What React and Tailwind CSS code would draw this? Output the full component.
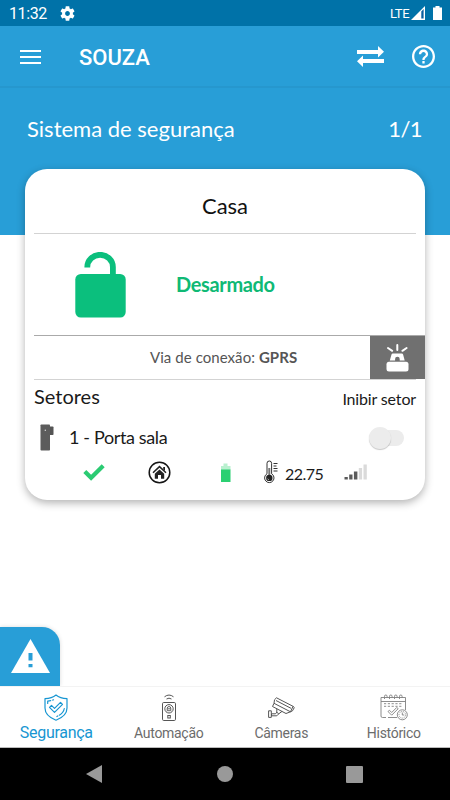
const LATO = "font-['Lato',sans-serif]"
const ROBOTO = "font-['Roboto',sans-serif]"

function StatusBar() {
  return (
    <div className="h-[26px] bg-[#0072a8] text-white flex items-center pl-[9px] pr-[8px]">
      <span className="text-[16px] leading-none w-[51px] pt-[2px] tracking-[-0.4px]">11:32</span>
      <svg width="15" height="15" viewBox="2 2 20 20" fill="currentColor">
        <path d="M19.14 12.94c.04-.3.06-.61.06-.94 0-.32-.02-.64-.07-.94l2.03-1.58c.18-.14.23-.41.12-.61l-1.92-3.32c-.12-.22-.37-.29-.59-.22l-2.39.96c-.5-.38-1.03-.7-1.62-.94l-.36-2.54c-.04-.24-.24-.41-.48-.41h-3.84c-.24 0-.43.17-.47.41l-.36 2.54c-.59.24-1.13.57-1.62.94l-2.39-.96c-.22-.08-.47 0-.59.22L2.74 8.87c-.12.21-.08.47.12.61l2.03 1.58c-.05.3-.09.63-.09.94s.02.64.07.94l-2.03 1.58c-.18.14-.23.41-.12.61l1.92 3.32c.12.22.37.29.59.22l2.39-.96c.5.38 1.03.7 1.62.94l.36 2.54c.05.24.24.41.48.41h3.84c.24 0 .44-.17.47-.41l.36-2.54c.59-.24 1.13-.56 1.62-.94l2.39.96c.22.08.47 0 .59-.22l1.92-3.32c.12-.22.07-.47-.12-.61l-2.01-1.58zM12 15.2c-1.75 0-3.2-1.45-3.2-3.2s1.45-3.2 3.2-3.2 3.2 1.45 3.2 3.2-1.45 3.2-3.2 3.2z" />
      </svg>
      <span className="ml-auto text-[13px] leading-none w-[21px] tracking-[-0.4px]">LTE</span>
      <svg width="15" height="15" viewBox="0 0 15 15">
        <path d="M0 14 14 0v14z" fill="#fff" />
        <path d="M10.3 5.4 12.6 3v9.6h-2.3z" fill="#0a5f9e" />
      </svg>
      <svg className="ml-[7px]" width="9" height="14" viewBox="0 0 9 14" fill="#fff">
        <path d="M2.5 0h4v1.6H9V14H0V1.6h2.5z" />
      </svg>
    </div>
  )
}

function AppBar() {
  return (
    <div className="h-[62px] flex items-center text-white pl-[20px] pr-[15px] pt-[1px] border-b-2 border-[#2697ce]">
      <div className="w-[21px] flex flex-col gap-[4px]">
        <div className="h-[2px] bg-white" />
        <div className="h-[2px] bg-white" />
        <div className="h-[2px] bg-white" />
      </div>
      <h1 className="ml-[38px] mt-[2px] text-[22px] font-medium leading-none">SOUZA</h1>
      <svg className="ml-auto" width="27" height="21" viewBox="0 0 27 21" fill="#fff">
        <path d="M0 4h21V0l6 5.700-6 5.700V8H0z" />
        <path d="M27 13H6V9.500L0 15.200 6 21v-4h21z" />
      </svg>
      <svg className="ml-[28px]" width="23" height="23" viewBox="2 2 20 20" fill="#fff">
        <path d="M11 18h2v-2h-2v2zm1-16C6.480 2 2 6.480 2 12s4.480 10 10 10 10-4.480 10-10S17.520 2 12 2zm0 18c-4.410 0-8-3.590-8-8s3.590-8 8-8 8 3.590 8 8-3.590 8-8 8zm0-14c-2.210 0-4 1.790-4 4h2c0-1.100.9-2 2-2s2 .9 2 2c0 2-3 1.750-3 5h2c0-2.250 3-2.500 3-5 0-2.210-1.790-4-4-4z" />
      </svg>
    </div>
  )
}

function LockIcon() {
  return (
    <svg className="ml-[41px]" width="51" height="66" viewBox="0 0 51 66">
      <rect x="0.300" y="22" width="50.400" height="43.500" rx="5.500" fill="#0bbf7d" />
      <path d="M12.300 15.500v-.4a12.800 12.300 0 0 1 25.600 0V24" fill="none" stroke="#0bbf7d" strokeWidth="5.800" />
    </svg>
  )
}

function SirenIcon() {
  return (
    <svg width="23" height="28" viewBox="0 0 23 28" fill="#fff">
      <path d="M11.300 1v5M2 4l4.200 2.800M20.600 4l-4.200 2.800" stroke="#fff" strokeWidth="2" strokeLinecap="round" />
      <path d="M6.800 9.500h9q1 0 1.300 1l1.600 6h-5v-1.500a2.300 2.300 0 0 0-4.600 0v1.500H3.800l1.700-6q.3-1 1.300-1z" />
      <rect x="0.500" y="17.800" width="22" height="9.700" rx="2.500" />
    </svg>
  )
}

function SensorIcon() {
  return (
    <svg width="14" height="27" viewBox="0 0 14 27">
      <rect x="9" y="2.500" width="4.500" height="8.500" rx="0.800" fill="#555" />
      <rect x="0.500" y="0.500" width="9.500" height="26" rx="0.800" fill="#5c5c5c" />
      <circle cx="5.300" cy="6.300" r="0.700" fill="#ddd" />
    </svg>
  )
}

function HouseIcon() {
  return (
    <svg width="23" height="23" viewBox="0 0 23 23" fill="none">
      <circle cx="11.500" cy="11.500" r="10.300" stroke="#151515" strokeWidth="1.500" />
      <path d="M5 11.800 11.500 5.600l6.500 6.200" stroke="#222" strokeWidth="1.500" />
      <path d="M15.200 6h1.800v4l-1.800-1.700z" fill="#222" />
      <path d="M6.800 12.800 11.500 8.500l4.700 4.300v5h-3.200v-3.700h-3v3.700H6.800z" fill="#222" />
    </svg>
  )
}

function ThermometerIcon() {
  return (
    <svg width="14" height="24" viewBox="0 0 14 24" fill="none">
      <path d="M3 13.800V3.300a2.300 2.300 0 0 1 4.600 0v10.500a4.700 4.700 0 1 1-4.600 0z" stroke="#333" strokeWidth="1" />
      <path d="M5.300 8v8" stroke="#777" strokeWidth="2" />
      <circle cx="5.300" cy="17.900" r="3.200" fill="#222" />
      <path d="M3.700 18.700a2 2 0 0 0 1.200 1.100" stroke="#ddd" strokeWidth="0.800" />
      <path d="M9.500 3.500h4M9.500 6h3M9.500 8.500h4M9.500 11h4" stroke="#333" strokeWidth="1" />
    </svg>
  )
}

function Sector() {
  return (
    <>
      <div className="flex items-center h-[38px] pl-[6px] pr-[21px]">
        <SensorIcon />
        <span className="ml-[15px] text-[18px] text-[#1a1a1a] leading-none tracking-[-0.36px]">1 - Porta sala</span>
        <div className="ml-auto flex items-center pt-[1px]">
          <div className="size-[22px] rounded-full bg-[#ececec] shadow-[0_1px_1px_rgba(0,0,0,0.22)] z-10" />
          <div className="-ml-[14px] w-[27px] h-[16px] rounded-full bg-[#ececec]" />
        </div>
      </div>
      <div className="flex items-center h-[30px] pl-[49px] pt-[2px]">
        <svg width="22" height="18" viewBox="0 0 22 18">
          <path d="m1.800 8.500 6.300 6.300L20.200 2.700" fill="none" stroke="#2bcb73" strokeWidth="4.200" />
        </svg>
        <div className="ml-[43px]"><HouseIcon /></div>
        <svg className="ml-[49px] mt-[1px]" width="11" height="20" viewBox="0 0 11 20">
          <path d="M3.500.5h4V3H10.500v4H1V3h2.500z" fill="#b9f0cf" />
          <rect x="1" y="6.500" width="9.500" height="12.500" fill="#2bd072" />
        </svg>
        <div className="ml-[33px]"><ThermometerIcon /></div>
        <span className="ml-[7px] mt-[3px] w-[39px] text-[16px] text-[#1a1a1a] leading-none tracking-[-0.5px]">22.75</span>
        <svg className="ml-[20px]" width="24" height="16" viewBox="0 0 24 16">
          <path d="M.5 13h3.300v2.500H.5zM5.200 10.500h3.300v5H5.200zM9.900 7.500h3.500v8H9.900z" fill="#5a5a5a" />
          <path d="M14.800 4h3.300v11.500h-3.300zM19.500.5h3.300v15h-3.300z" fill="#dadada" />
        </svg>
      </div>
    </>
  )
}

function SystemCard() {
  return (
    <div className={`${LATO} -mt-[66px] mx-[25px] h-[331px] rounded-[22px] bg-white shadow-[0_3px_9px_rgba(0,0,0,0.3)] pl-[9px]`}>
      <div className="h-[65px] mr-[9px] pt-[8px] border-b border-[#d3d3d3] flex items-center justify-center text-[22px] text-[#111]">Casa</div>
      <div className="h-[102px] border-b border-[#aaa] flex items-center">
        <LockIcon />
        <span className="ml-[50px] mb-[2px] text-[20px] font-bold leading-none text-[#0fb975] tracking-[-0.35px]">Desarmado</span>
      </div>
      <div className="h-[44px] flex">
        <div className="flex-1 border-b border-[#d3d3d3] flex items-center text-[15px] text-[#555] pl-[116px]">
          <p className="tracking-[0.06px]">Via de conexão: <b>GPRS</b></p>
        </div>
        <div className="w-[46px] border-b border-[#d3d3d3]">
          <div className="w-[55px] h-[43px] bg-[#707070] flex items-center justify-center"><SirenIcon /></div>
        </div>
        <div className="w-[9px]" />
      </div>
      <div className="h-[38px] mr-[9px] flex items-center justify-between text-[#1a1a1a] leading-none">
        <h2 className="text-[20px] pb-[7px]">Setores</h2>
        <span className="text-[16px] pb-[1px] tracking-[-0.15px]">Inibir setor</span>
      </div>
      <Sector />
    </div>
  )
}

function ShieldIcon() {
  return (
    <svg width="24" height="27" viewBox="0 0 24 27" fill="none" stroke="#1796d2" strokeWidth="1.200" strokeLinecap="round" strokeLinejoin="round">
      <path d="M12 1c3 2.500 6.500 3.500 11 3.700V14c0 5.800-4.500 9.700-11 12.200C5.500 23.700 1 19.800 1 14V4.700C5.500 4.500 9 3.500 12 1z" />
      <path d="m5.500 13.300 2-2 3 3 6-6 2 2-8 8z" />
      <path d="M3.700 9.500V7.200l3-.5M8.700 6.100l.8-.3M20.300 14.500c-.5 3-2.300 5.100-5 6.700M13.700 22l-.8.500" />
    </svg>
  )
}

function DoorbellIcon() {
  return (
    <svg width="14" height="27" viewBox="0 0 14 27" fill="none" stroke="#555" strokeWidth="1">
      <path d="M2.500 2.800Q7 -.7 11.500 2.800M4.500 5Q7 3.300 9.500 5" />
      <rect x="0.500" y="8.500" width="13" height="18" rx="1.200" />
      <circle cx="7" cy="14.800" r="4.200" />
      <path d="M5.200 16.700v-2.200q0-2 1.800-2t1.800 2v2.200zM5.200 14.800h3.600" strokeWidth="0.900" />
      <rect x="5.800" y="21.500" width="2.500" height="2.500" />
    </svg>
  )
}

function CameraIcon() {
  return (
    <svg width="27" height="21" viewBox="0 0 27 21" fill="none" stroke="#555" strokeWidth="1" strokeLinejoin="round">
      <path d="M8.500.8 25 9.300l-2.500 5.500L6 6.300Q5.800 2 8.500.8z" />
      <path d="M6 6.300 4.500 9.500l13.500 7 4.500-1.700M25 9.300l1.300 1.200-1.800 3.300-2 1M8 3.500l15 7.800" />
      <path d="M8.800 11.800v3.500l2 1.500 3.300-2.500M9 15l-1.500 1.800H3.500v2h5.300l2-2" />
      <path d="M.6 13.800h2.700v6.600H.6z" />
    </svg>
  )
}

function CalendarIcon() {
  return (
    <svg width="28" height="27" viewBox="0 0 28 27" fill="none" stroke="#808080" strokeWidth="0.900">
      <path d="M25.500 16V3.500H1v18.500q0 1.500 1.500 1.500H6M8 23.500h9M1 7.500h24.500" />
      <path d="M4.500 5V2.300a1.300 1.300 0 0 1 2.600 0V4M9.500 5V2.300a1.300 1.300 0 0 1 2.600 0V4M14.500 5V2.300a1.300 1.300 0 0 1 2.600 0V4M19.500 5V2.300a1.300 1.300 0 0 1 2.600 0V4" />
      <path d="M4 9.700h18.500M4 12.300h18.500" strokeDasharray="2.200 1.600" />
      <path d="m8 17.500 1.500-1.200 2.200 2.200 5-5 1.500 1.200-6.500 6.500z" />
      <circle cx="22.300" cy="20.800" r="5" />
      <circle cx="22.300" cy="20.800" r="3.300" strokeDasharray="1 1" />
      <path d="M22.300 18.500v2.500h2" />
    </svg>
  )
}

function Tab({ icon, label, active }) {
  return (
    <div className={`flex-1 flex flex-col items-center ${active ? "text-[#1796d2] text-[16px] tracking-[-0.3px]" : "text-[#6c6c6c] text-[14px] tracking-[-0.3px]"}`}>
      <div className="h-[36px] flex items-center">{icon}</div>
      <span className="h-[16px] leading-[16px]">{label}</span>
    </div>
  )
}

export default function App() {
  return (
    <div className={`${ROBOTO} w-[450px] h-[800px] overflow-hidden bg-white flex flex-col`}>
      <StatusBar />
      <div className="h-[209px] shrink-0 bg-[#289ed7]">
        <AppBar />
        <div className={`${LATO} flex justify-between items-center h-[81px] pl-[27px] pr-[28px] text-[22px] text-white`}>
          <span>Sistema de segurança</span>
          <span className="tracking-[-0.6px]">1/1</span>
        </div>
      </div>
      <SystemCard />

      <div className="mt-auto w-[60px] h-[59px] rounded-tr-[18px] bg-[#289ed7] flex justify-center pt-[12px] shadow-[0_0_4px_rgba(0,0,0,0.15)]">
        <svg width="39" height="34" viewBox="0 0 39 34">
          <path d="M19.500 0 39 34H0z" fill="#fff" />
          <path d="M17.500 14h4v7.500h-4zM17.500 25h4v3.300h-4z" fill="#289ed7" />
        </svg>
      </div>

      <nav className="h-[62px] shrink-0 bg-white border-t border-[#f3f3f3] border-b border-b-[#bbb] flex pt-[2px] z-10">
        <Tab icon={<ShieldIcon />} label="Segurança" active />
        <Tab icon={<DoorbellIcon />} label="Automação" />
        <Tab icon={<CameraIcon />} label="Câmeras" />
        <Tab icon={<CalendarIcon />} label="Histórico" />
      </nav>

      <div className="h-[52px] shrink-0 bg-black flex items-center justify-between pl-[86px] pr-[87px]">
        <svg width="16" height="18" viewBox="0 0 16 18" fill="#999"><path d="M16 0v18L0 9z" /></svg>
        <div className="ml-px size-[16px] rounded-full bg-[#999]" />
        <div className="size-[17px] rounded-[1px] bg-[#999]" />
      </div>
    </div>
  )
}
